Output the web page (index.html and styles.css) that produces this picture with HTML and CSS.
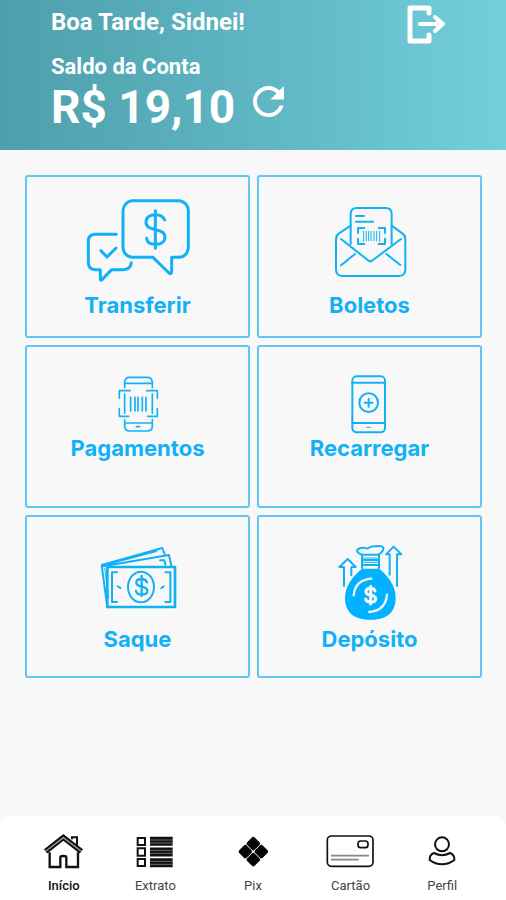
FILE: index.html
```html
<!DOCTYPE html>
<html lang="pt-BR">
<head>
  <meta charset="UTF-8">
  <meta name="viewport" content="width=device-width, initial-scale=1.0">
  <title>Conta Digital</title>
  <link rel="stylesheet" href="styles.css">
</head>
<body>

  <header class="header">
    <div class="header-top">
      <p class="greeting">Boa Tarde, Sidnei!</p>
      <button class="icon-button" type="button" aria-label="Sair">
        <svg class="exit-icon" viewBox="407 5 40 39">
          <path d="M429 13V8H410V41H429V35" stroke-width="5" />
          <path d="M420 24H442" stroke-width="4" />
          <path d="M435 17L443 24L435 31" stroke-width="4" />
          <path class="head" d="M436 18L443 24L436 30Z" />
        </svg>
      </button>
    </div>
    <p class="balance-label">Saldo da Conta</p>
    <div class="balance-row">
      <p class="balance">R$ 19,10</p>
      <button class="icon-button" type="button" aria-label="Atualizar saldo">
        <svg class="refresh-icon" viewBox="4 4 16 16">
          <path d="M17.650 6.350C16.200 4.900 14.210 4 12 4c-4.420 0-7.990 3.580-7.990 8s3.570 8 7.990 8c3.730 0 6.840-2.550 7.730-6h-2.080c-.820 2.330-3.040 4-5.650 4-3.310 0-6-2.690-6-6s2.690-6 6-6c1.660 0 3.140.690 4.220 1.780L13 11h7V4l-2.350 2.350z" />
        </svg>
      </button>
    </div>
  </header>

  <main class="cards">
    <a class="card" href="#transferir">
      <svg class="card-icon" viewBox="191 84 324 279">
        <g stroke-width="9">
          <path d="M334 92H478Q503 98 504 122V232Q502 258 478 262H454V305Q453 314 446 309L398 262H336Q310 258 308 232V122Q310 98 334 92Z" />
          <path d="M288 193H224Q204 194 204 214V276Q204 298 224 299H240V328Q241 333 246 328L274 299H308Q332 298 333 278" />
          <path d="M242 242L260 261L287 234" />
          <path d="M433 150C428 137 416 134 405 134C388 134 377 143 377 157C377 171 388 175 405 179C424 183 434 188 434 202C434 217 420 223 405 223C391 223 380 217 379 205M405 122V235" />
        </g>
      </svg>
      <span class="card-label">Transferir</span>
    </a>

    <a class="card" href="#boletos">
      <svg class="card-icon" viewBox="189 84 324 279">
        <g stroke-width="6">
          <path d="M293 222V132Q293 114 311 114H398Q416 114 416 132V222" />
          <path d="M293 167L258 190Q249 196 249 208V300Q250 317 268 318H438Q456 317 457 300V208Q457 196 448 190L416 167" />
          <path d="M264 207L344 270Q352 278 360 270L444 207M264 286L306 252M400 252L442 285" />
          <path d="M309 138H333M309 155H360M315 189V174H334M377 174H396V189M315 206V222H334M377 222H396V206" />
        </g>
        <path d="M332 184V215M340 184V212M347 184V212M354 184V212M363 184V212M371 184V212M380 184V215" stroke-width="3" />
      </svg>
      <span class="card-label">Boletos</span>
    </a>

    <a class="card" href="#pagamentos">
      <svg class="card-icon" viewBox="191 78 324 198">
        <g stroke-width="5">
          <path d="M313 137V121Q314 106 328 106H381Q395 106 396 121V137M313 124H396M313 156V214M396 156V214M313 233V254Q314 267 328 267H381Q395 267 396 254V233M313 243H396" />
          <path d="M348 254H358" />
          <path d="M297 169V146H329M379 146H411V169M297 200V223H325M382 223H411V200" />
          <path d="M331 166V207M344 166V207M353 166V207M366 166V207M377 166V207" stroke-width="5" />
        </g>
      </svg>
      <span class="card-label">Pagamentos</span>
    </a>

    <a class="card" href="#recarregar">
      <svg class="card-icon" viewBox="189 78 324 198">
        <g stroke-width="6">
          <rect x="298" y="103" width="98" height="168" rx="13" />
          <path d="M298 122H396M298 243H396" />
          <circle cx="347" cy="182" r="28" />
          <path d="M335 182H359M347 170V194" />
          <path d="M341 256H353" stroke-width="3" />
        </g>
      </svg>
      <span class="card-label">Recarregar</span>
    </a>

    <a class="card" href="#saque">
      <svg class="card-icon" viewBox="191 78 324 261">
        <g stroke-width="6">
          <path d="M261 286L244 159L426 108L434 129" />
          <path d="M248 163L446 129L453 162M259 157L408 117" />
          <path d="M253 169L265 258" stroke-width="3" />
          <path d="M419 145L432 145L435 158" />
          <rect x="261" y="165" width="203" height="120" stroke-width="8" />
          <path d="M290 181H275V270H290M435 181H450V270H435" />
          <ellipse cx="362" cy="225" rx="39" ry="46" />
          <path d="M380 211C377 203 371 201 363 201C354 201 348 205 348 212C348 220 356 222 364 224C374 226 381 229 381 237C381 244 374 248 364 248C355 248 349 245 347 237M364 192V252" stroke-width="7" />
        </g>
        <path class="solid" d="M288 220Q298 220 305 231Q293 232 288 220ZM434 219Q423 221 418 231Q431 232 434 219Z" />
      </svg>
      <span class="card-label">Saque</span>
    </a>

    <a class="card" href="#deposito">
      <svg class="card-icon" viewBox="189 78 324 261">
        <path class="solid" d="M328 170H378C402 187 428 220 428 257C428 302 400 323 352 323C304 323 276 302 276 257C276 220 304 187 328 170Z" />
        <g stroke-width="6">
          <path d="M326 128Q309 122 313 113Q325 104 343 110Q353 101 369 103Q385 100 391 107Q392 118 377 128Z" />
          <path d="M327 128V169M378 128V169M327 144H378M327 159H378" />
          <path d="M327 138H378M327 151H378" stroke-width="3" />
          <path d="M273 222V165H259L284 141L308 165H295V190" />
          <path d="M410 188V127H399L422 104L445 127H432V222" />
        </g>
        <g class="shine" stroke-width="7">
          <path d="M302 250Q306 204 355 200M402 248Q398 296 349 300" />
          <path d="M366 237C364 230 359 229 353 229C344 229 339 233 339 239C339 246 346 248 353 249C362 251 368 254 368 260C368 267 361 270 353 270C345 270 339 268 338 261M353 223V276" stroke-width="9" />
        </g>
      </svg>
      <span class="card-label">Depósito</span>
    </a>
  </main>

  <nav class="navbar">
    <a class="nav-item active" href="#inicio">
      <svg class="nav-icon" viewBox="133 88 122 102">
        <path d="M153 143V187H185V158Q185 154 194 154Q203 154 203 158V187H238V143" stroke-width="7" />
        <path d="M220 104V98H235V126" stroke-width="6" />
        <path d="M141 140L194 98L248 140" stroke-width="16" />
        <path d="M142 139L194 99L247 139" stroke-width="4" class="groove" />
      </svg>
      <span>Início</span>
    </a>
    <a class="nav-item" href="#extrato">
      <svg class="nav-icon" viewBox="410 88 114 102">
        <path d="M415 100H437V121H415ZM415 131H437V153H415ZM415 163H437V184H415Z" stroke-width="6" />
        <path d="M452 110H520M452 142H520M452 174H520" stroke-width="27" />
        <path d="M452 106H520M452 115H520M452 137H520M452 146H520M452 170H520M452 179H520" stroke-width="2" class="groove" />
      </svg>
      <span>Extrato</span>
    </a>
    <a class="nav-item" href="#pix">
      <svg class="nav-icon" viewBox="-46 -53 92 102">
        <g class="solid-dark" transform="rotate(45)">
          <rect x="-33" y="-33" width="32" height="32" rx="6" />
          <rect x="1" y="-33" width="32" height="32" rx="6" />
          <rect x="-33" y="1" width="32" height="32" rx="6" />
          <rect x="1" y="1" width="32" height="32" rx="6" />
        </g>
      </svg>
      <span>Pix</span>
    </a>
    <a class="nav-item" href="#cartao">
      <svg class="nav-icon" viewBox="225 88 145 102">
        <rect x="229" y="94" width="137" height="91" rx="12" stroke-width="5" />
        <rect x="321" y="109" width="30" height="20" rx="8" stroke-width="5" />
        <path d="M240 153H354M240 165H323" stroke-width="5" class="gray" />
      </svg>
      <span>Cartão</span>
    </a>
    <a class="nav-item" href="#perfil">
      <svg class="nav-icon" viewBox="526 88 84 102">
        <circle cx="568" cy="119" r="21" stroke-width="6" />
        <path d="M544 145C534 149 530 157 531 166Q548 179 568 179Q588 179 605 166C606 157 602 149 592 145Q568 158 544 145Z" stroke-width="6" />
      </svg>
      <span>Perfil</span>
    </a>
  </nav>

</body>
</html>
```

FILE: styles.css
```css
* {
  box-sizing: border-box;
}

body {
  font-family: Roboto, sans-serif;
  background-color: #f8f8f8;
  margin: 0;
  min-height: 100vh;
  display: flex;
  flex-direction: column;
}

p {
  margin: 0;
}

a {
  text-decoration: none;
}

svg {
  display: block;
  fill: none;
  stroke-linecap: round;
  stroke-linejoin: round;
  overflow: visible;
}

/* Header */
.header {
  background: linear-gradient(90deg, #4d9fab, #5fb5c2 50%, #73cfdc);
  color: #ffffff;
  padding: 5px 59px 16px 51px;
  font-weight: 700;
}

.header-top {
  display: flex;
  justify-content: space-between;
  align-items: flex-start;
  height: 48px;
}

.greeting {
  font-size: 24px;
  line-height: 34px;
}

.icon-button {
  background: none;
  border: none;
  padding: 0;
  cursor: pointer;
}

.exit-icon {
  width: 40px;
  height: 39px;
  stroke: #ffffff;
}

.head {
  fill: #ffffff;
  stroke: none;
}

.balance-label {
  font-size: 22px;
  line-height: 28px;
}

.balance-row {
  display: flex;
  align-items: flex-start;
  gap: 18px;
}

.balance {
  font-size: 46px;
  line-height: 53px;
}

.refresh-icon {
  width: 31px;
  height: 31px;
  margin-top: 5px;
  fill: #ffffff;
}

/* Service cards */
.cards {
  flex: 1;
  display: grid;
  grid-template-columns: 1fr 1fr;
  grid-auto-rows: min-content;
  gap: 7px;
  padding: 25px 24px 24px 25px;
}

.card {
  display: flex;
  flex-direction: column;
  align-items: center;
  min-height: 163px;
  padding-top: 21px;
  border: 2px solid #62c6f5;
  border-radius: 3px;
  color: #12b1f6;
}

.card-icon {
  width: 108px;
  stroke: #12b1f6;
}

.card-label {
  font-family: Inter, sans-serif;
  font-size: 22px;
  font-weight: 700;
  line-height: 28px;
}

.solid {
  fill: #00b2ff;
  stroke: none;
}

.shine {
  stroke: #f8f8f8;
}

/* Bottom navigation */
.navbar {
  display: grid;
  grid-template-columns: 22fr 24fr 25fr 24fr 22fr;
  padding: 18px 20px 6px;
  background-color: #ffffff;
  border-radius: 12px 12px 0 0;
}

.nav-item {
  display: flex;
  flex-direction: column;
  align-items: center;
  gap: 10px;
  color: #444444;
  font-size: 13px;
  line-height: 16px;
}

.nav-item.active {
  color: #111111;
  font-weight: 500;
}

.nav-icon {
  height: 34px;
  stroke: #111111;
  stroke-linecap: butt;
  stroke-linejoin: miter;
}

.groove {
  stroke: #999999;
}

.gray {
  stroke: #888888;
}

.solid-dark {
  fill: #050505;
  stroke: none;
}
```
